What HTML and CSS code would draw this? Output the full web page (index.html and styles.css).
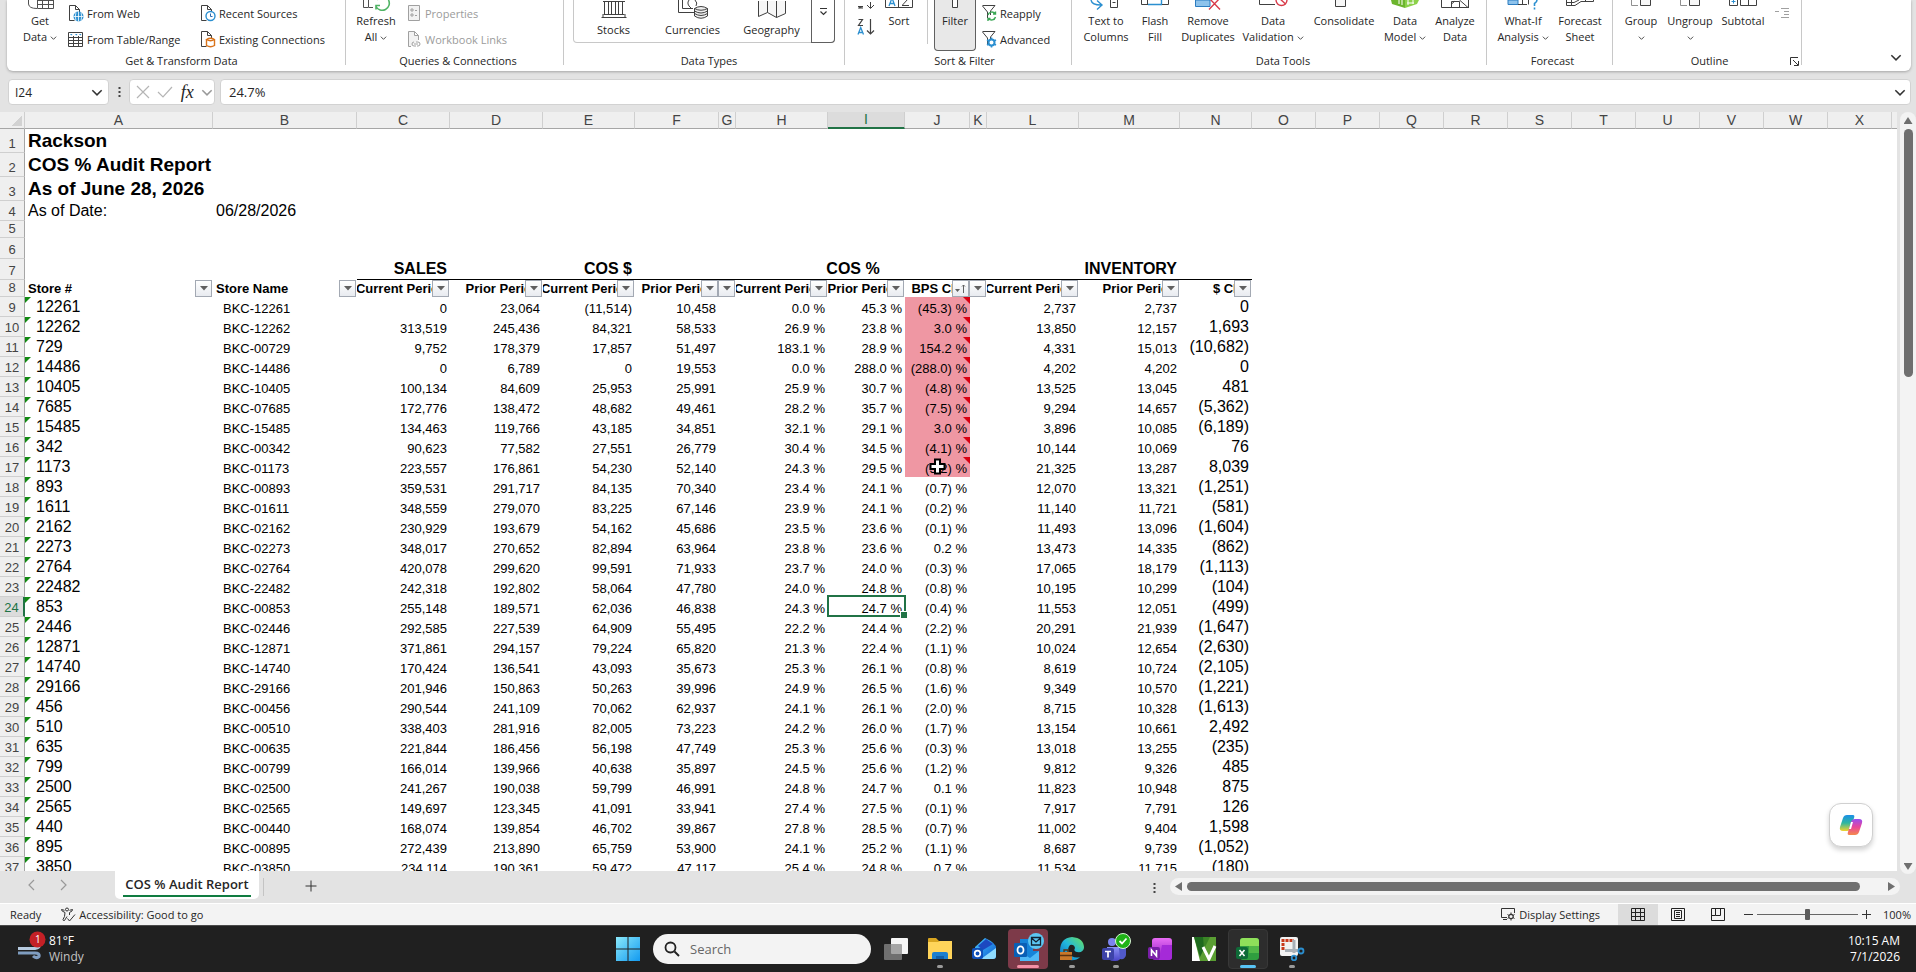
FILE: index.html
```html
<!DOCTYPE html>
<html lang="en">
<head>
<meta charset="utf-8">
<title>COS % Audit Report</title>
<link rel="stylesheet" href="styles.css">
</head>
<body>
<svg class="defs" aria-hidden="true">
  <defs>
    <symbol id="chev" viewBox="0 0 10 6"><path d="M1 1l4 4 4-4" fill="none" stroke="currentColor" stroke-width="1.3"/></symbol>
    <symbol id="page" viewBox="0 0 16 18"><path d="M6.500 16.500H1.500V1.500H7.500L11.500 5.500V8" fill="#fff" stroke="#404040"/><path d="M7.500 1.500V5.500H11.500" fill="none" stroke="#404040"/></symbol>
    <symbol id="funnel" viewBox="0 0 16 18"><path d="M1.500 1.500H14L9.500 7V11M6.500 14V8L1.500 2" fill="none" stroke="#404040"/></symbol>
    <linearGradient id="win" x1="0" y1="0" x2="1" y2="1"><stop offset="0" stop-color="#8be9fb"/><stop offset="1" stop-color="#129af0"/></linearGradient>
    <linearGradient id="blue" x1="0" y1="0" x2="1" y2="1"><stop offset="0" stop-color="#49c8ff"/><stop offset="1" stop-color="#0a5bd0"/></linearGradient>
    <linearGradient id="edge" x1="0" y1="1" x2="1" y2="0"><stop offset="0" stop-color="#0b63b8"/><stop offset=".5" stop-color="#22b8dd"/><stop offset="1" stop-color="#6be35a"/></linearGradient>
    <linearGradient id="pink" x1="0" y1="0" x2="0" y2="1"><stop offset="0" stop-color="#e86bf5"/><stop offset="1" stop-color="#8b1cc0"/></linearGradient>
    <linearGradient id="teams" x1="0" y1="0" x2="0" y2="1"><stop offset="0" stop-color="#8b93f5"/><stop offset="1" stop-color="#4a46c8"/></linearGradient>
    <linearGradient id="cop1" x1="0" y1="0" x2="0" y2="1"><stop offset="0" stop-color="#1a8fe8"/><stop offset=".5" stop-color="#2fb6a0"/><stop offset="1" stop-color="#f2d32c"/></linearGradient>
    <linearGradient id="cop2" x1="0" y1="0" x2="0" y2="1"><stop offset="0" stop-color="#9a4df0"/><stop offset=".5" stop-color="#e8459a"/><stop offset="1" stop-color="#f58a4b"/></linearGradient>
  </defs>
</svg>

<header class="ribbon">
  <section class="group g-get">
    <div class="tools">
      <button class="big w46"><svg width="28" height="12" viewBox="0 0 28 12"><path d="M2.500 0V4Q3 8.500 11 8.500" fill="none" stroke="#505050"/><path d="M11.500 0V8.500H27.500V0M11 4.500H28M16.500 0V8M22.500 0V8M11 .5H28" fill="none" stroke="#505050"/></svg><span>Get</span><span>Data <svg class="dd"><use href="#chev"/></svg></span></button>
      <div class="col c132">
        <button class="small"><svg class="i16"><use href="#page"/><circle cx="10.500" cy="12.500" r="5" fill="#2b8fd0"/><path d="M5.500 12.500H15.500M10.500 7.500V17.500M8 8.500Q6.500 12.500 8 16.500M13 8.500Q14.500 12.500 13 16.500" stroke="#fff" fill="none" stroke-width=".8"/></svg>From Web</button>
        <button class="small"><svg class="i16" viewBox="0 0 16 18"><path d="M.5 2.500H14.500V16.500H.5ZM.5 7.500H14.500M.5 10.500H14.500M.5 13.500H14.500M5.500 6V16M10.500 6V16" fill="none" stroke="#404040"/><path d="M2 4h2.500l-1.200 1.500zM7 4h2.500l-1.200 1.500zM11 4h2.500l-1.200 1.500z" fill="#2b8fd0"/></svg>From Table/Range</button>
      </div>
      <div class="col">
        <button class="small"><svg class="i16"><use href="#page"/><circle cx="10.500" cy="12" r="4.500" fill="#fff" stroke="#2b8fd0" stroke-width="1.400"/><path d="M10.500 9.500V12.500H12.500" fill="none" stroke="#2b6cb0"/></svg>Recent Sources</button>
        <button class="small"><svg class="i16"><use href="#page"/><path d="M6.500 9.500V15.500Q10.500 18 14.500 15.500V9.500Q10.500 7 6.500 9.500Q10.500 12 14.500 9.500" fill="#fff" stroke="#d9731a" stroke-width="1.400"/></svg>Existing Connections</button>
      </div>
    </div>
    <h2>Get &amp; Transform Data</h2>
  </section>
  <section class="group g-query">
    <div class="tools">
      <button class="big w48"><svg width="30" height="12" viewBox="0 0 30 12"><path d="M2.500 0V7.500H7M7.500 0V7.500H12" fill="none" stroke="#505050"/><path d="M27.500 0A7 7 0 0 1 15 6.500M15 9.500V5.500H19M16 0q1-2 4-2" fill="none" stroke="#4fb364" stroke-width="1.600"/></svg><span>Refresh</span><span>All <svg class="dd"><use href="#chev"/></svg></span></button>
      <div class="col">
        <button class="small" disabled><svg class="i13" viewBox="0 0 13 18"><path d="M.5 1.500H11.500V16.500H.5Z" fill="#f2f2f2" stroke="#a0a0a0"/><path d="M3 5h2v2H3zM3 10h2v2H3z" fill="none" stroke="#a0a0a0"/><path d="M7 6.500h2M7 11.500h2" stroke="#a0a0a0"/></svg>Properties</button>
        <button class="small" disabled><svg class="i13" viewBox="0 0 13 18"><path d="M3 16.500H.5V1.500H6.500L10.500 5.500V10M6.500 1.500V5.500H10.500" fill="#f2f2f2" stroke="#a0a0a0"/><path d="M6 12a2 2 0 0 0 0 4h2M9 16h1a2 2 0 0 0 0-4H8M6 14h4" fill="none" stroke="#a0a0a0"/></svg>Workbook Links</button>
      </div>
    </div>
    <h2>Queries &amp; Connections</h2>
  </section>
  <section class="group g-types">
    <div class="gallery">
      <button class="type"><svg width="28" height="18" viewBox="0 0 28 18"><path d="M4.500 0V13M8.500 0V13M11.500 0V13M15.500 0V13M18.500 0V13M22.500 0V13M3 .5H25M3.500 13.500H24.500M1.500 16.500H26.500M3 13V16M25 13V16" fill="none" stroke="#404040"/></svg>Stocks</button>
      <button class="type"><svg width="32" height="20" viewBox="0 0 32 20"><path d="M1.500 0V12.500H17M5.500 0V8.500H16M12 0q-3 4 2 8M18 0q3 3 1 6" fill="none" stroke="#404040"/><path d="M17.500 8.500V16Q24 20.500 30.500 16V8.500Q24 4.500 17.500 8.500Q24 12 30.500 8.500M17.500 11Q24 15 30.500 11M17.500 13.500Q24 17.500 30.500 13.500" fill="#eee" stroke="#404040"/></svg>Currencies</button>
      <button class="type"><svg width="30" height="18" viewBox="0 0 30 18"><path d="M1.500 0V15.500L10.500 11.500L19.500 16.500L28.500 12.500V0M10.500 0V11.500M19.500 0V16.500" fill="#f7f7f7" stroke="#404040"/></svg>Geography</button>
      <button class="more" aria-label="More data types"><svg width="9" height="8" viewBox="0 0 9 8"><path d="M1 .5H8" stroke="#333"/><path d="M1.500 3.500L4.500 6.500L7.500 3.500" fill="none" stroke="#333" stroke-width="1.200"/></svg></button>
    </div>
    <h2>Data Types</h2>
  </section>
  <section class="group g-sort">
    <div class="tools">
      <div class="sorts">
        <button aria-label="Sort A to Z"><svg width="18" height="14" viewBox="0 0 18 14"><path d="M1 11.500H6L1.500 13H6M13.500 7V13M10 10l3.500 3.500L17 10" fill="none" stroke="#404040"/></svg></button>
        <button aria-label="Sort Z to A"><svg width="18" height="18" viewBox="0 0 18 18"><path d="M1.500 1.500H5.500L1.500 7.500H6M13.500 1V15.500M10 12.500l3.500 3.500L17 12.500" fill="none" stroke="#404040" stroke-width="1.200"/><path d="M1 16.500L3.700 9.500L6.500 16.500M2 14.500H5.500" fill="none" stroke="#2b8fd0" stroke-width="1.300"/></svg></button>
      </div>
      <button class="big w44"><svg width="28" height="12" viewBox="0 0 28 12"><path d="M.5 0V7.500H27.500V0M13.500 0V7.500" fill="none" stroke="#404040"/><path d="M4 6L7 -2L10 6M5 3.500H9" fill="none" stroke="#2b8fd0" stroke-width="1.300"/><path d="M17 5.500H24M17.500 5L23 -1" fill="none" stroke="#404040"/></svg><span>Sort</span></button>
      <i class="rule"></i>
      <button class="big w42 on" aria-pressed="true"><svg width="16" height="12" viewBox="0 0 16 12"><path d="M5.500 0V7.500H10.500V0" fill="#fff" stroke="#404040"/></svg><span>Filter</span></button>
      <div class="col">
        <button class="small"><svg class="i16"><use href="#funnel"/><path d="M7 11a4 4 0 0 1 7-1.500M14.500 7.500v2.500h-2.500M14.500 13a4 4 0 0 1-7 1.500M7 17v-2.500h2.500" fill="none" stroke="#3aa655" stroke-width="1.400"/></svg>Reapply</button>
        <button class="small"><svg class="i16"><use href="#funnel"/><circle cx="10.500" cy="12.500" r="3" fill="#fff" stroke="#2b8fd0" stroke-width="2"/><path d="M10.500 7.500v2M10.500 15.500v2M6 10l2 1M13 14l2 1M6 15l2-1M13 11l2-1" stroke="#2b8fd0" stroke-width="1.600"/></svg>Advanced</button>
      </div>
    </div>
    <h2>Sort &amp; Filter</h2>
  </section>
  <section class="group g-tools">
    <div class="tools">
      <button class="big w54"><svg width="32" height="12" viewBox="0 0 32 12"><path d="M1 0Q2 5 11 5M7 .5L12 5L7 9.500" fill="none" stroke="#2b8fd0" stroke-width="1.400"/><path d="M20.500 0V7.500H27.500V0M22.500 2.500h3" fill="none" stroke="#404040"/></svg><span>Text to</span><span>Columns</span></button>
      <button class="big w44"><svg width="28" height="12" viewBox="0 0 28 12"><path d="M.5 0V4.500H27.500V0M6.500 0V4" fill="none" stroke="#404040"/><path d="M7 4.500H21M20.500 0V4" fill="none" stroke="#2b8fd0" stroke-width="1.400"/></svg><span>Flash</span><span>Fill</span></button>
      <button class="big w62"><svg width="28" height="12" viewBox="0 0 28 12"><path d="M1.500 0H16V6.500H1.500Z" fill="#8ec3ec" stroke="#2b7cc0"/><path d="M15 -2L26 9.500M26 -2L15 9.500" stroke="#d83b4a" stroke-width="1.400"/></svg><span>Remove</span><span>Duplicates</span></button>
      <button class="big w68"><svg width="30" height="12" viewBox="0 0 30 12"><path d="M1.500 0V4.500H17" fill="none" stroke="#404040"/><circle cx="23.500" cy="0" r="5.500" fill="#fff" stroke="#d83b4a" stroke-width="1.400"/><path d="M19.500 -3.500l8 7.500" stroke="#d83b4a" stroke-width="1.400"/></svg><span>Data</span><span>Validation <svg class="dd"><use href="#chev"/></svg></span></button>
      <button class="big w74"><svg width="28" height="12" viewBox="0 0 28 12"><path d="M5.500 0V6.500H15.500V0" fill="#f7f7f7" stroke="#404040"/></svg><span>Consolidate</span></button>
      <button class="big w48"><svg width="28" height="12" viewBox="0 0 28 12"><path d="M0 0H14V8L1 4Z" fill="#6cb52d"/><path d="M14 0H28L26 4L14 8Z" fill="#8cd14a"/><path d="M8 0v4M11 0v5M16 3h7M17 0v5M22 0v4" stroke="#fff"/></svg><span>Data</span><span>Model <svg class="dd"><use href="#chev"/></svg></span></button>
      <button class="big w52"><svg width="28" height="12" viewBox="0 0 28 12"><path d="M.5 0V7.500H27.500M10.500 7V1.500H18.500V7M10.500 4L14 1M18.500 0L27 7.500M27.500 0V8" fill="none" stroke="#404040"/></svg><span>Analyze</span><span>Data</span></button>
    </div>
    <h2>Data Tools</h2>
  </section>
  <section class="group g-fore">
    <div class="tools">
      <button class="big w62"><svg width="32" height="12" viewBox="0 0 32 12"><path d="M1 0H11V4.500H1Z" fill="#8ec3ec" stroke="#2b7cc0"/><path d="M11 4.500H20M15.500 0V4.500M21.500 0V4.500" fill="none" stroke="#404040"/><path d="M30 0Q30 2 27.500 3.500V6M27.500 7.500V9.500" fill="none" stroke="#2b8fd0" stroke-width="1.600"/></svg><span>What-If</span><span>Analysis <svg class="dd"><use href="#chev"/></svg></span></button>
      <button class="big w52"><svg width="30" height="12" viewBox="0 0 30 12"><path d="M1.500 0V5.500H10L16 1.500H28.500V-1M1 2.500H9L14 0M20.500 0V1.500M6.500 0V5" fill="none" stroke="#404040"/></svg><span>Forecast</span><span>Sheet</span></button>
    </div>
    <h2>Forecast</h2>
  </section>
  <section class="group g-outline">
    <div class="tools">
      <button class="big w48"><svg width="20" height="12" viewBox="0 0 20 12"><path d="M7 5.500H.5V0" fill="none" stroke="#909090"/><path d="M9.500 0V5.500H19.500V0" fill="#f7f7f7" stroke="#404040"/></svg><span>Group</span><span><svg class="dd"><use href="#chev"/></svg></span></button>
      <button class="big w50"><svg width="20" height="12" viewBox="0 0 20 12"><path d="M7 5.500H.5V0" fill="none" stroke="#909090"/><path d="M9.500 0V5.500H19.500V0" fill="#f7f7f7" stroke="#404040"/></svg><span>Ungroup</span><span><svg class="dd"><use href="#chev"/></svg></span></button>
      <button class="big w56"><svg width="28" height="12" viewBox="0 0 28 12"><path d="M.5 0V5.500H8.500V0M11.500 0V5.500H27.500V0M19.500 0V5" fill="none" stroke="#404040"/><path d="M2.500 1.500H6.500M4.500 0V3.500" stroke="#2b8fd0"/></svg><span>Subtotal</span></button>
      <svg class="detail" width="14" height="12" viewBox="0 0 14 12"><path d="M0 3.500H4M6 .5H14M9 3.500H14M9 6.500H14M6 9.500H14" stroke="#a0a0a0"/></svg>
    </div>
    <h2>Outline</h2>
    <button class="launch" aria-label="Outline settings"><svg width="9" height="9" viewBox="0 0 9 9"><path d="M.5 8V.5H8M3 3l5 5M8.500 4V8.500H4" fill="none" stroke="#333"/></svg></button>
  </section>
  <button class="collapse" aria-label="Collapse ribbon"><svg class="chev"><use href="#chev"/></svg></button>
</header>

<div class="formula">
  <label class="box name"><input type="text" value="I24" aria-label="Name box"><svg class="chev"><use href="#chev"/></svg></label>
  <svg class="dots" width="3" height="12" viewBox="0 0 3 12"><path d="M.5 1h2v2h-2zM.5 5h2v2h-2zM.5 9h2v2h-2z" fill="#444"/></svg>
  <div class="box fx">
    <button aria-label="Cancel"><svg width="14" height="14" viewBox="0 0 14 14"><path d="M1 1l12 12M13 1L1 13" stroke="#b5b5b5" stroke-width="1.200"/></svg></button>
    <button aria-label="Enter"><svg width="16" height="12" viewBox="0 0 16 12"><path d="M1 6l5 5L15 1" fill="none" stroke="#b5b5b5" stroke-width="1.200"/></svg></button>
    <button class="fxb">fx</button>
    <svg class="chev dim"><use href="#chev"/></svg>
  </div>
  <label class="box entry"><input type="text" value="24.7%" aria-label="Formula bar"><svg class="chev"><use href="#chev"/></svg></label>
</div>

<main class="sheet">
  <div class="pane">
    <table id="grid"></table>
    <button class="copilot" aria-label="Copilot"><svg width="24" height="22" viewBox="0 0 24 22"><path d="M8 1H14Q16 1 15 4L12 14Q11 17 8 17H4Q0 17 1 13L4 4Q5 1 8 1Z" fill="url(#cop1)"/><path d="M16 21H10Q8 21 9 18L12 8Q13 5 16 5H20Q24 5 23 9L20 18Q19 21 16 21Z" fill="url(#cop2)"/><path d="M12 8h2l-2 7h-2z" fill="#fff"/></svg></button>
  </div>
  <div class="vbar"><i class="up"></i><i class="thumb"></i><i class="down"></i></div>
</main>

<nav class="tabs">
  <button class="nav" aria-label="Previous sheet"><svg width="7" height="12" viewBox="0 0 7 12"><path d="M6 1L1 6l5 5" fill="none" stroke="#999" stroke-width="1.200"/></svg></button>
  <button class="nav" aria-label="Next sheet"><svg width="7" height="12" viewBox="0 0 7 12"><path d="M1 1l5 5-5 5" fill="none" stroke="#999" stroke-width="1.200"/></svg></button>
  <button class="tab"><span>COS % Audit Report</span></button>
  <i class="tabrule"></i>
  <button class="add" aria-label="New sheet"><svg width="12" height="12" viewBox="0 0 12 12"><path d="M6 .5V11.500M.5 6H11.500" stroke="#333"/></svg></button>
  <svg class="dots push" width="3" height="12" viewBox="0 0 3 12"><path d="M.5 1h2v2h-2zM.5 5h2v2h-2zM.5 9h2v2h-2z" fill="#444"/></svg>
  <div class="hbar"><i class="left"></i><i class="thumb"></i><i class="right"></i></div>
</nav>

<footer class="status">
  <span>Ready</span>
  <span class="acc"><svg width="16" height="15" viewBox="0 0 16 15"><circle cx="7" cy="2.500" r="1.500" fill="none" stroke="#333"/><path d="M1.500 2.500Q1 4 5 5.500Q5 10 3 12.500Q3 14 4.500 13.500L7 9.500M12.500 2.500Q13 4 9.500 5.500V8M7.500 11.500l2 2.500L15 7.500M1.500 2.500l3 .8M12.500 2.500l-3 .8" fill="none" stroke="#333"/></svg>Accessibility: Good to go</span>
  <button class="display"><svg width="15" height="13" viewBox="0 0 15 13"><path d="M6 9.500H.5V.5H13.500V5M2 11.500H6" fill="none" stroke="#333"/><circle cx="10" cy="8.500" r="2.200" fill="none" stroke="#333" stroke-width="1.200"/><path d="M10 4.500v2M10 10.500v2M6.500 6.500l1.500 1M12 9.500l1.500 1M6.500 10.500l1.500-1M12 7.500l1.500-1" stroke="#333"/></svg>Display Settings</button>
  <button class="view on" aria-label="Normal"><svg width="14" height="13" viewBox="0 0 14 13"><path d="M.5.5H13.500V12.500H.5ZM.5 4.500H13.500M.5 8.500H13.500M4.500.5V12.500M9.500.5V12.500" fill="none" stroke="#222"/></svg></button>
  <button class="view" aria-label="Page layout"><svg width="14" height="13" viewBox="0 0 14 13"><path d="M.5.5H13.500V12.500H.5ZM3.500 2.500H10.500V10.500H3.500ZM5 4.500H9M5 6.500H9M5 8.500H9" fill="none" stroke="#222"/></svg></button>
  <button class="view" aria-label="Page break preview"><svg width="14" height="13" viewBox="0 0 14 13"><path d="M.5.5H13.500V12.500H.5ZM4.500.5V7.500H.5M4.500 7.500H9.500V.5" fill="none" stroke="#222"/></svg></button>
  <button class="zoom minus" aria-label="Zoom out"><svg width="9" height="9" viewBox="0 0 9 9"><path d="M0 4.500H9" stroke="#333"/></svg></button>
  <input class="slider" type="range" min="0" max="100" value="50" aria-label="Zoom">
  <button class="zoom" aria-label="Zoom in"><svg width="9" height="9" viewBox="0 0 9 9"><path d="M0 4.500H9M4.500 0V9" stroke="#333"/></svg></button>
  <span class="pct">100%</span>
</footer>

<div class="taskbar">
  <button class="weather">
    <svg width="34" height="30" viewBox="0 0 34 30"><path d="M0 17.500H17Q22 17 22 12.500Q21 8 16 10V14" fill="none" stroke="#b7cbe0" stroke-width="3"/><path d="M0 22H17Q22 22 21 25.500Q18 28 15 25" fill="none" stroke="#7f9dc0" stroke-width="3"/><circle cx="19.500" cy="8.500" r="8" fill="#c42026"/><text x="17" y="12" fill="#fff" font-size="10">1</text></svg>
    <span class="wtext"><span>81°F</span><span class="dimtext">Windy</span></span>
  </button>
  <div class="apps">
    <button class="app" aria-label="Start"><svg width="24" height="24" viewBox="0 0 24 24"><path d="M0 0H11.500V11.500H0ZM12.500 0H24V11.500H12.500ZM0 12.500H11.500V24H0ZM12.500 12.500H24V24H12.500Z" fill="url(#win)"/></svg></button>
    <label class="search"><svg width="16" height="16" viewBox="0 0 16 16"><circle cx="6.500" cy="6.500" r="5" fill="none" stroke="#222" stroke-width="1.800"/><path d="M10.500 10.500L15 15" stroke="#222" stroke-width="2"/></svg><input type="search" placeholder="Search" aria-label="Search"></label>
    <button class="app" aria-label="Task view"><svg width="26" height="24" viewBox="0 0 26 24"><rect x="8" y="1" width="17" height="16" rx="1" fill="#f5f5f5"/><rect x="1" y="7" width="18" height="16" rx="1" fill="#8a8a8a" opacity=".75"/></svg></button>
    <button class="app run" aria-label="File Explorer"><svg width="26" height="24" viewBox="0 0 26 24"><path d="M1 2Q1 1 2 1H9L12 4H24Q25 4 25 5V9H1Z" fill="#d9a520"/><path d="M1 5H11L13 4H25V22H1Z" fill="#ffd45a"/><path d="M5 22V17Q5 15 7 15H19Q21 15 21 17V22Z" fill="#1a7fd0"/><path d="M9 22v-3h8v3" fill="#0f5ea8"/></svg></button>
    <button class="app" aria-label="Outlook"><svg width="26" height="24" viewBox="0 0 26 24"><path d="M4 10L14 1Q25 6 25 11V19Q25 22 22 22H9Q4 22 4 18Z" fill="url(#blue)"/><path d="M7 9L15 2L22 7L12 13Z" fill="#1c49c0"/><path d="M10 22L25 11V19Q25 22 22 22Z" fill="#8fdcff"/><rect x="1" y="11" width="11" height="11" rx="2" fill="#0f4fb8"/><circle cx="6.500" cy="16.500" r="2.800" fill="none" stroke="#fff" stroke-width="1.700"/></svg></button>
    <button class="app alert" aria-label="Outlook classic"><svg width="34" height="32" viewBox="0 0 34 32"><path d="M9 6H22V18H28V28H9Z" fill="#1583d8"/><path d="M9 19L19 25L28 18V28H9Z" fill="#4fb8f5"/><rect x="3" y="10" width="13" height="14" rx="1" fill="#0a5fb5"/><ellipse cx="9.500" cy="17" rx="3" ry="3.700" fill="none" stroke="#fff" stroke-width="1.800"/><circle cx="25" cy="8" r="8" fill="#5cc6f2"/><path d="M20.500 4.500H29.500V12H20.500ZM20.500 5l4.500 4 4.500-4" fill="none" stroke="#123" stroke-width="1.300"/></svg></button>
    <button class="app run" aria-label="Edge"><svg width="26" height="24" viewBox="0 0 26 24"><path d="M1 14Q1 1 13 0Q25 1 25 11Q24 16 18 15Q14 14 16 11Q15 7 11 8Q8 11 10 16Q14 22 21 20Q17 24 11 23Q2 22 1 14Z" fill="url(#edge)"/><path d="M1 15H13V23H1Z" fill="#c9772a"/><path d="M5 15v-2h4v2M1 18.500H13" fill="none" stroke="#5c3210" stroke-width="1.400"/></svg></button>
    <button class="app run" aria-label="Teams"><svg width="30" height="32" viewBox="0 0 30 32"><circle cx="11" cy="9" r="4" fill="#7c84ee"/><path d="M6 14H20V23Q20 28 14 28Q6 28 6 22Z" fill="url(#teams)"/><path d="M18 15H25V22Q24 27 19 26Z" fill="#5059c9"/><rect x="1" y="15" width="12" height="12" rx="2" fill="#3d43a8"/><path d="M4 18.500H10M7 18.500V24.500" stroke="#fff" stroke-width="1.700"/><circle cx="22" cy="8" r="7.500" fill="#1fb317" stroke="#d8f5d5"/><path d="M18.500 8l2.500 2.500L25.500 5.500" fill="none" stroke="#fff" stroke-width="1.800"/></svg></button>
    <button class="app" aria-label="OneNote"><svg width="26" height="24" viewBox="0 0 26 24"><rect x="5" y="1" width="20" height="22" rx="3" fill="url(#pink)"/><path d="M15 8H25V20Q25 23 22 23H12Z" fill="#a52ad8"/><rect x="1" y="10" width="12" height="12" rx="2" fill="#7a1fa8"/><path d="M4.500 19V13L9.500 19V13" fill="none" stroke="#fff" stroke-width="1.600"/></svg></button>
    <button class="app" aria-label="V"><svg width="26" height="24" viewBox="0 0 26 24"><rect x="1" width="24" height="24" fill="#fff"/><path d="M3 0H25V24H9Z" fill="#5a9e33"/><path d="M3 0H13V12L9 20Z" fill="#1f6a1f"/><path d="M12 0H19L13 12Z" fill="#3b8426"/><path d="M12 10L18 22L24 9" fill="none" stroke="#fff" stroke-width="3"/></svg></button>
    <button class="app active" aria-label="Excel"><svg width="26" height="24" viewBox="0 0 26 24"><rect x="5" y="1" width="19" height="22" rx="3" fill="#2f9e3f"/><path d="M8 1H21Q24 1 24 4V9H5V4Q5 1 8 1Z" fill="#8fe05a"/><path d="M14 9H24V16H14Z" fill="#52b848"/><rect x="1" y="10" width="12" height="12" rx="2" fill="#0f6b38"/><path d="M4.500 13L9.500 19M9.500 13L4.500 19" stroke="#fff" stroke-width="1.600"/></svg></button>
    <button class="app run" aria-label="Snipping Tool"><svg width="26" height="24" viewBox="0 0 26 24"><rect x="1" y="0" width="18" height="19" rx="2" fill="#f2f2f2"/><path d="M4 13V3.500H15" fill="none" stroke="#c8391b" stroke-width="3" stroke-dasharray="3 1"/><path d="M15 3V16M6 13.500H20" stroke="#a8b0b8" stroke-width="3"/><circle cx="22" cy="14" r="2.500" fill="none" stroke="#2b8fd0" stroke-width="1.800"/><circle cx="15" cy="21" r="2.300" fill="none" stroke="#2b8fd0" stroke-width="1.800"/></svg></button>
  </div>
  <div class="clock"><span>10:15 AM</span><span>7/1/2026</span></div>
</div>
<script src="script.js"></script>
</body>
</html>
```
FILE: script.js
```js
const letters = 'ABCDEFGHIJKLMNOPQRSTUVWX'.split('');
const widths = [188, 144, 93, 93, 92, 84, 17, 92, 77, 65, 17, 92, 101, 72];

// store | name | C | D | E | F | H | I | J | L | M | N
const stores = `12261|BKC-12261|0|23,064|(11,514)|10,458|0.0|45.3|(45.3)|2,737|2,737|0
12262|BKC-12262|313,519|245,436|84,321|58,533|26.9|23.8|3.0|13,850|12,157|1,693
729|BKC-00729|9,752|178,379|17,857|51,497|183.1|28.9|154.2|4,331|15,013|(10,682)
14486|BKC-14486|0|6,789|0|19,553|0.0|288.0|(288.0)|4,202|4,202|0
10405|BKC-10405|100,134|84,609|25,953|25,991|25.9|30.7|(4.8)|13,525|13,045|481
7685|BKC-07685|172,776|138,472|48,682|49,461|28.2|35.7|(7.5)|9,294|14,657|(5,362)
15485|BKC-15485|134,463|119,766|43,185|34,851|32.1|29.1|3.0|3,896|10,085|(6,189)
342|BKC-00342|90,623|77,582|27,551|26,779|30.4|34.5|(4.1)|10,144|10,069|76
1173|BKC-01173|223,557|176,861|54,230|52,140|24.3|29.5|(5.2)|21,325|13,287|8,039
893|BKC-00893|359,531|291,717|84,135|70,340|23.4|24.1|(0.7)|12,070|13,321|(1,251)
1611|BKC-01611|348,559|279,070|83,225|67,146|23.9|24.1|(0.2)|11,140|11,721|(581)
2162|BKC-02162|230,929|193,679|54,162|45,686|23.5|23.6|(0.1)|11,493|13,096|(1,604)
2273|BKC-02273|348,017|270,652|82,894|63,964|23.8|23.6|0.2|13,473|14,335|(862)
2764|BKC-02764|420,078|299,620|99,591|71,933|23.7|24.0|(0.3)|17,065|18,179|(1,113)
22482|BKC-22482|242,318|192,802|58,064|47,780|24.0|24.8|(0.8)|10,195|10,299|(104)
853|BKC-00853|255,148|189,571|62,036|46,838|24.3|24.7|(0.4)|11,553|12,051|(499)
2446|BKC-02446|292,585|227,539|64,909|55,495|22.2|24.4|(2.2)|20,291|21,939|(1,647)
12871|BKC-12871|371,861|294,157|79,224|65,820|21.3|22.4|(1.1)|10,024|12,654|(2,630)
14740|BKC-14740|170,424|136,541|43,093|35,673|25.3|26.1|(0.8)|8,619|10,724|(2,105)
29166|BKC-29166|201,946|150,863|50,263|39,996|24.9|26.5|(1.6)|9,349|10,570|(1,221)
456|BKC-00456|290,544|241,109|70,062|62,937|24.1|26.1|(2.0)|8,715|10,328|(1,613)
510|BKC-00510|338,403|281,916|82,005|73,223|24.2|26.0|(1.7)|13,154|10,661|2,492
635|BKC-00635|221,844|186,456|56,198|47,749|25.3|25.6|(0.3)|13,018|13,255|(235)
799|BKC-00799|166,014|139,966|40,638|35,897|24.5|25.6|(1.2)|9,812|9,326|485
2500|BKC-02500|241,267|190,038|59,799|46,991|24.8|24.7|0.1|11,823|10,948|875
2565|BKC-02565|149,697|123,345|41,091|33,941|27.4|27.5|(0.1)|7,917|7,791|126
440|BKC-00440|168,074|139,854|46,702|39,867|27.8|28.5|(0.7)|11,002|9,404|1,598
895|BKC-00895|272,439|213,890|65,759|53,900|24.1|25.2|(1.1)|8,687|9,739|(1,052)
3850|BKC-03850|234,114|190,361|59,472|47,117|25.4|24.8|0.7|11,534|11,715|(180)`
  .split('\n').map(line => line.split('|'));

const td = (text = '', cls = '', span = 1) =>
  `<td${cls ? ` class="${cls}"` : ''}${span > 1 ? ` colspan="${span}"` : ''}>${text}</td>`;
const blanks = (n, cls) => td('', cls).repeat(n);
const row = (n, cells, cls = '') =>
  `<tr class="${cls}"><th scope="row"${n === 24 ? ' class="sel"' : ''}>${n}</th>${cells}</tr>`;

const arrow = '<svg width="8" height="5" viewBox="0 0 8 5"><path d="M0 0H8L4 4.500Z" fill="#606060"/></svg>';
const sorted = '<svg width="11" height="10" viewBox="0 0 11 10"><path d="M0 5H5L2.500 8Z" fill="#606060"/><path d="M8.500 9V1M7 2.500L8.500 1L10 2.500" fill="none" stroke="#606060"/></svg>';
const head = (text, cls, icon = arrow) =>
  td(`<div class="clip ${cls}"><span>${text}</span></div><button class="filter" aria-label="Filter">${icon}</button>`, 'head');

const cursor = '<svg class="cursor" width="17" height="17" viewBox="0 0 17 17"><path d="M6 1.500H11V6H15.500V11H11V15.500H6V11H1.500V6H6Z" fill="#fff" stroke="#000" stroke-width="2"/></svg>';

let html = '<colgroup><col class="c-head">' +
  letters.map((_, i) => `<col style="width:${widths[i] || 64}px">`).join('') + '<col></colgroup>';
html += '<thead><tr><th class="corner"></th>' +
  letters.map(l => `<th scope="col"${l === 'I' ? ' class="sel"' : ''}>${l}</th>`).join('') +
  '<th></th></tr></thead><tbody>';

html += row(1, td('Rackson', 'title') + blanks(24), 'h24');
html += row(2, td('COS % Audit Report', 'title') + blanks(24), 'h24');
html += row(3, td('As of June 28, 2026', 'title') + blanks(24), 'h24');
html += row(4, td('As of Date:', 'large') + td('06/28/2026', 'large') + blanks(23), 'h20');
html += row(5, blanks(25), 'h17');
html += row(6, blanks(25), 'h21');
html += row(7, blanks(2) + td('SALES', 'band') + blanks(1, 'band') + td('COS $', 'band') +
  blanks(2, 'band') + td('COS %', 'band mid', 3) + blanks(2, 'band') + td('INVENTORY', 'band') +
  blanks(1, 'band') + blanks(11), 'h21');
html += row(8, head('Store #', 'l') + head('Store Name', 'l') + head('Current Period', '') +
  head('Prior Period', '') + head('Current Period', '') + head('Prior Period', '') + head('', '') +
  head('Current Period', '') + head('Prior Period', '') + head('BPS Chg', '', sorted) + head('', '') +
  head('Current Period', '') + head('Prior Period', '') + head('$ Chg', '') + blanks(11), 'h17');

stores.forEach((s, i) => {
  const n = i + 9;
  const flag = i < 9;
  html += row(n,
    td(s[0], 'store') + td(s[1], 'bkc') +
    td(s[2], 'num') + td(s[3], 'num') + td(s[4], 'num') + td(s[5], 'num') + td() +
    td(s[6] + ' %', 'num') + td(s[7] + ' %', n === 24 ? 'num picked' : 'num') +
    td(s[8] + ' %' + (n === 17 ? cursor : ''), flag ? 'num flag' : 'num') + td() +
    td(s[9], 'num') + td(s[10], 'num') + td(s[11], 'num large') + blanks(11), 'h20');
});
document.getElementById('grid').innerHTML = html + '</tbody>';
```
FILE: styles.css
```css
* { box-sizing: border-box; }
body {
  margin: 0;
  height: 100vh;
  display: flex;
  flex-direction: column;
  overflow: hidden;
  background: #e3e3e3;
  color: #262626;
  font-family: "Open Sans", "Noto Sans", sans-serif;
  font-size: 11px;
}
button, input { font: inherit; color: inherit; border: 0; background: none; padding: 0; margin: 0; }
input { outline: 0; min-width: 0; }
svg { flex: none; }
.defs { position: absolute; width: 0; height: 0; }
.chev { width: 12px; height: 7px; color: #333; }
.dim { color: #999; }
.dd { width: 7px; height: 4px; color: #333; vertical-align: middle; overflow: visible; }

/* Ribbon */
.ribbon {
  display: flex;
  flex: none;
  margin: 0 5px 0 7px;
  height: 71px;
  background: #fff;
  border-radius: 0 0 6px 6px;
  box-shadow: 0 1px 3px rgba(0, 0, 0, .28);
}
.group { position: relative; display: flex; flex-direction: column; padding-bottom: 2px; }
.group::after { content: ""; position: absolute; right: 0; top: 0; height: 65px; width: 1px; background: #c8c8c8; }
.g-get { width: 339px; padding-left: 10px; }
.g-query { width: 218px; padding-left: 6px; }
.g-types { width: 281px; padding-left: 9px; }
.g-sort { width: 227px; padding-left: 12px; }
.g-tools { width: 415px; padding-left: 7px; }
.g-fore { width: 126px; padding-left: 5px; }
.g-outline { width: 189px; padding-left: 4px; }
.group h2 { margin: 0; font-size: 11px; font-weight: 400; line-height: 16px; text-align: center; }
.tools { display: flex; height: 53px; align-items: flex-start; }
.big { display: flex; flex-direction: column; align-items: center; line-height: 16px; white-space: nowrap; }
.big > svg { margin-bottom: 1px; }
.w42 { width: 42px; } .w44 { width: 44px; } .w46 { width: 46px; } .w48 { width: 48px; }
.w50 { width: 50px; } .w52 { width: 52px; } .w54 { width: 54px; } .w56 { width: 56px; }
.w62 { width: 62px; } .w68 { width: 68px; } .w74 { width: 74px; }
.big.on { height: 51px; background: #e8e8e8; border: 1px solid #606060; border-top: 0; border-radius: 0 0 4px 4px; }
.col { display: flex; flex-direction: column; padding-left: 5px; }
.c132 { width: 137px; }
.g-get .col + .col { padding-left: 0; }
.g-query .col { padding-left: 7px; }
.small { display: flex; align-items: center; gap: 3px; height: 26px; white-space: nowrap; }
.small:disabled { color: #9b9b9b; }
.i16 { width: 16px; height: 18px; overflow: visible; }
.i13 { width: 15px; height: 18px; }
.gallery { display: flex; width: 262px; height: 43px; margin-bottom: 10px; border: 1px solid #c8c8c8; border-top: 0; border-radius: 0 0 4px 4px; }
.type { flex: 1; display: flex; flex-direction: column; justify-content: flex-start; align-items: center; line-height: 16px; }
.type svg { height: 20px; margin-bottom: 2px; }
.more { width: 24px; margin: 0 -1px -1px 0; border: 1px solid #606060; border-top: 0; border-radius: 0 0 4px 0; display: flex; justify-content: center; padding-top: 8px; }
.sorts { display: flex; flex-direction: column; gap: 9px; width: 20px; height: 40px; overflow: hidden; justify-content: flex-end; padding-bottom: 4px; }
.sorts button { display: flex; }
.rule { width: 1px; height: 44px; margin: 0 6px; background: #c8c8c8; }
.detail { margin: 8px 0 0 4px; }
.launch { position: absolute; right: 3px; bottom: 5px; display: flex; }
.collapse { margin-left: auto; align-self: flex-end; display: flex; padding: 10px 9px; }

/* Formula bar */
.formula { display: flex; align-items: center; flex: none; margin: 8px 5px 7px 8px; font-size: 12px; }
.box { display: flex; align-items: center; height: 26px; background: #fff; border: 1px solid #d2d2d2; border-radius: 4px; }
.name { width: 101px; padding: 0 5px 0 6px; }
.name input, .entry input { flex: 1; width: 40px; }
.entry input { font-size: 13px; }
.formula .dots { margin: 0 8px 0 9px; }
.fx { width: 86px; justify-content: space-between; padding: 0 1px 0 6px; }
.fx button { display: flex; }
.fx .fxb { font: italic 18px/20px "Liberation Serif", serif; }
.entry { flex: 1; margin-left: 5px; padding: 0 4px 0 8px; }

/* Worksheet */
.sheet { flex: 1; min-height: 0; display: flex; gap: 3px; }
.pane { position: relative; flex: 1; overflow: hidden; background: #fff; }
table { width: 100%; table-layout: fixed; border-collapse: separate; border-spacing: 0; font-family: "Liberation Sans", Arial, sans-serif; font-size: 13px; line-height: 17px; color: #000; }
.c-head { width: 25px; }
th { padding: 0; font-weight: 400; color: #444; background: #efefef; }
thead th { height: 17px; font-size: 14px; line-height: 15px; border-bottom: 1px solid #a6a6a6; border-right: 1px solid #cfcfcf; }
thead th:last-child { border-right: 0; }
thead .sel { background: #dcdcdc; color: #217346; border-bottom: 2px solid #217346; }
tbody th { border-right: 1px solid #a6a6a6; border-bottom: 1px solid #cfcfcf; vertical-align: bottom; line-height: 16px; }
tbody .sel { background: #dcdcdc; color: #217346; border-right: 2px solid #217346; }
.corner { background: linear-gradient(135deg, transparent 50%, #d2d2d2 50%) 12px 4px / 10px 10px no-repeat #efefef; }
td { position: relative; padding: 0 3px; vertical-align: bottom; white-space: nowrap; }
.h17 { height: 17px; } .h20 { height: 20px; } .h21 { height: 21px; } .h24 { height: 24px; }
.title { font-size: 19px; font-weight: 700; line-height: 24px; }
.large { font-size: 16px; line-height: 20px; }
.band { font-size: 16px; font-weight: 700; line-height: 20px; text-align: right; border-bottom: 1px solid #000; }
.mid { text-align: center; }
.head { padding: 0; font-weight: 700; }
.clip { display: flex; justify-content: flex-end; height: 17px; padding: 0 3px; overflow: hidden; }
.clip.l { justify-content: flex-start; }
.filter { position: absolute; right: 1px; top: 0; width: 17px; height: 17px; display: flex; align-items: center; justify-content: center; border: 1px solid #a3a9b3; background: linear-gradient(#fff, #e8ebf0); }
.store { padding-left: 11px; font-size: 16px; line-height: 20px; }
.store::before { content: ""; position: absolute; left: 0; top: 0; width: 6px; height: 6px; background: #128a12; clip-path: polygon(0 0, 100% 0, 0 100%); }
.bkc { padding-left: 10px; }
.num { text-align: right; }
.flag { background: #ef97a3; }
.flag::before { content: ""; position: absolute; right: 0; top: 0; width: 7px; height: 7px; background: #d90012; clip-path: polygon(0 0, 100% 0, 100% 100%); }
.picked::before { content: ""; position: absolute; inset: -2px -1px 0 -1px; border: 2px solid #217346; }
.picked::after { content: ""; position: absolute; right: -2px; bottom: -1px; width: 6px; height: 6px; background: #217346; border: solid #fff; border-width: 1px 0 0 1px; }
.cursor { position: absolute; left: 24px; top: 1px; }
.copilot { position: absolute; right: 24px; bottom: 24px; width: 44px; height: 44px; display: flex; align-items: center; justify-content: center; background: #fff; border: 1px solid #d0d0d0; border-radius: 12px; box-shadow: 0 3px 5px rgba(0, 0, 0, .18); }

.vbar { width: 16px; margin-bottom: -3px; display: flex; flex-direction: column; align-items: center; padding: 5px 0 4px; background: #f3f3f3; border-radius: 8px; z-index: 1; }
.vbar .thumb { width: 9px; height: 33%; margin-top: 5px; background: #6f6f6f; border-radius: 5px; }
.up, .down { width: 9px; height: 7px; background: #6f6f6f; clip-path: polygon(50% 0, 100% 100%, 0 100%); }
.down { margin-top: auto; clip-path: polygon(0 0, 100% 0, 50% 100%); }

/* Sheet tabs */
.tabs { display: flex; flex: none; align-items: flex-start; height: 32px; padding: 0 16px 0 15px; }
.nav { width: 32px; padding-top: 8px; }
.tab { height: 28px; min-width: 144px; margin-left: 36px; padding: 2px 8px 0; background: #fff; border-radius: 0 0 5px 5px; font-size: 13px; font-weight: 600; line-height: 19px; }
.tab span { display: block; padding-bottom: 1px; border-bottom: 2px solid #107c41; }
.tabrule { width: 1px; height: 18px; margin: 7px 0 0 4px; background: #c4c4c4; }
.add { margin: 9px 0 0 41px; display: flex; }
.tabs .push { margin: 11px 14px 0 auto; }
.hbar { width: 730px; height: 17px; margin-top: 7px; display: flex; align-items: center; padding: 0 5px; background: #f3f3f3; border-radius: 9px; }
.hbar .thumb { flex: 1; margin: 0 28px 0 5px; height: 9px; background: #6f6f6f; border-radius: 5px; }
.left, .right { width: 7px; height: 9px; background: #6f6f6f; clip-path: polygon(100% 0, 100% 100%, 0 50%); }
.right { clip-path: polygon(0 0, 100% 50%, 0 100%); }

/* Status bar */
.status { display: flex; flex: none; align-items: center; height: 22px; padding: 0 5px 0 10px; background: #f3f3f3; border-top: 1px solid #fff; }
.acc { display: flex; align-items: center; gap: 3px; margin-left: 19px; }
.display { display: flex; align-items: center; gap: 3px; margin: 0 18px 0 auto; }
.view { width: 40px; height: 21px; display: flex; align-items: center; justify-content: center; }
.view.on { background: #dcdcdc; }
.zoom { display: flex; }
.minus { margin-left: 6px; }
.slider { appearance: none; width: 101px; height: 12px; margin: 0 4px; background: linear-gradient(#666, #666) center / 100% 1px no-repeat; }
.slider::-webkit-slider-thumb { appearance: none; width: 5px; height: 11px; background: #5c5c5c; border-radius: 1px; }
.pct { margin-left: 12px; }

/* Taskbar */
.taskbar { display: grid; grid-template-columns: 1fr auto 1fr; flex: none; height: 47px; background: #202020; border-top: 1px solid #4a4a4a; color: #fff; font-size: 12px; }
.weather { display: flex; justify-self: start; align-items: center; padding-left: 18px; text-align: left; }
.weather svg { margin: 0 -3px 6px 0; }
.wtext, .clock { display: flex; flex-direction: column; justify-content: center; line-height: 16px; }
.dimtext { color: #c4c4c4; }
.apps { display: flex; align-items: center; padding-left: 4px; }
.app { position: relative; width: 44px; height: 46px; display: flex; align-items: center; justify-content: center; }
.search { display: flex; align-items: center; gap: 10px; width: 218px; height: 30px; margin: 0 3px; padding: 0 11px; background: #f3f3f3; border-radius: 15px; color: #333; font-size: 13px; }
.search input { flex: 1; }
.search input::placeholder { color: #666; opacity: 1; }
.run::after, .active::after, .alert::after { content: ""; position: absolute; bottom: 4px; width: 6px; height: 3px; border-radius: 2px; background: #9a9a9a; }
.alert svg, .active svg { position: relative; }
.alert::before, .active::before { content: ""; position: absolute; inset: 3px 2px; border-radius: 4px; background: #7d3a49; }
.active::before { background: #2d2d2d; border: 1px solid #383838; }
.alert::after { width: 22px; background: #f48fa5; }
.active::after { width: 16px; background: #58c4f5; }
.clock { justify-self: end; padding-right: 16px; text-align: right; }
```
